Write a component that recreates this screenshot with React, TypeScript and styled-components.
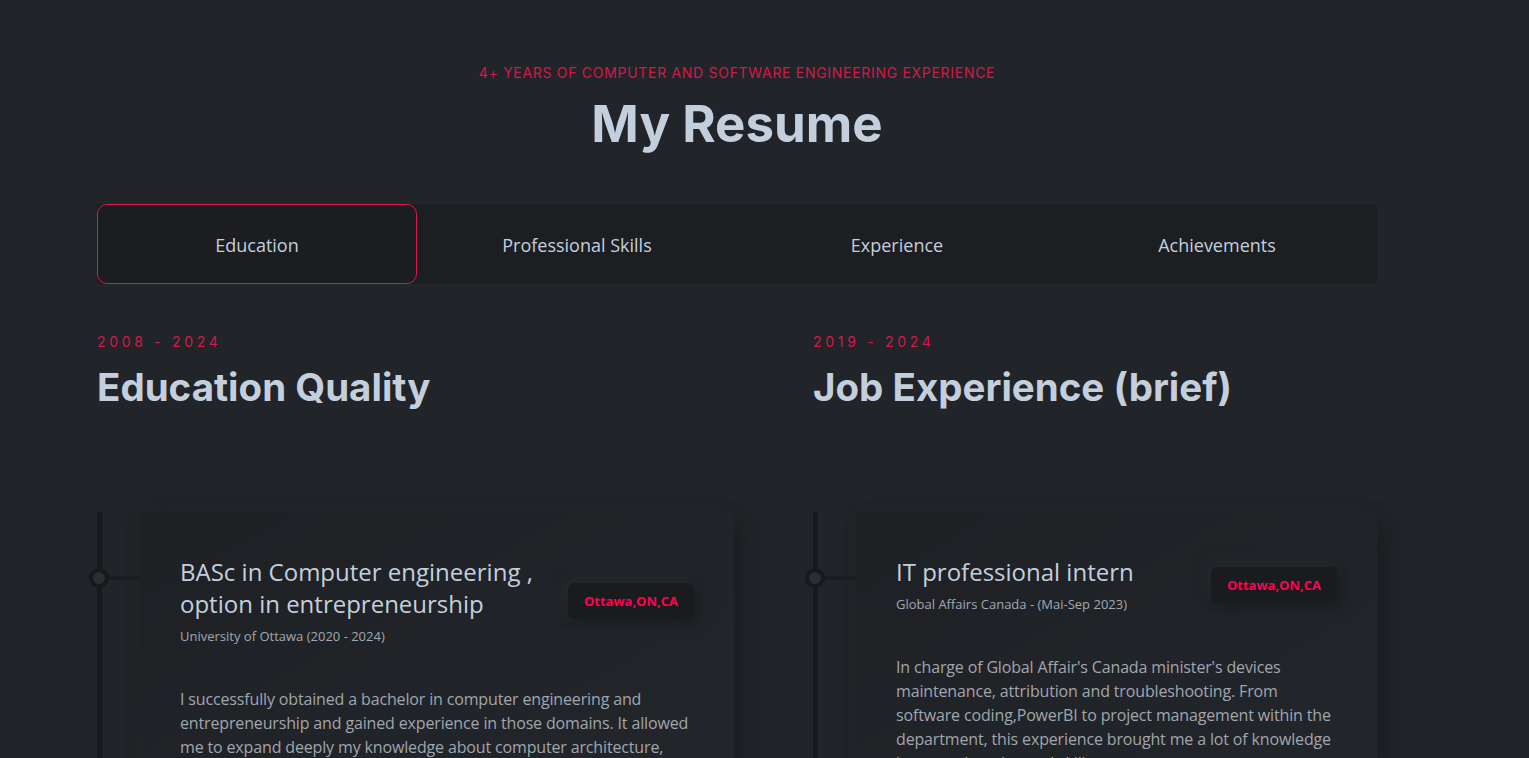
import React from 'react';
import styled, { createGlobalStyle } from 'styled-components';

const GlobalStyle = createGlobalStyle`
  html, body {
    margin: 0;
    padding: 0;
    background: #212428;
  }
  body {
    font-family: 'Open Sans', 'Noto Sans', sans-serif;
    color: #878e99;
    overflow: hidden;
  }
  * { box-sizing: border-box; }
`;

const tabs = ['Education', 'Professional Skills', 'Experience', 'Achievements'];

const columns = [
  {
    years: '2008 - 2024',
    heading: 'Education Quality',
    title: ['BASc in Computer engineering ,', 'option in entrepreneurship'],
    sub: 'University of Ottawa (2020 - 2024)',
    place: 'Ottawa,ON,CA',
    text:
      'I successfully obtained a bachelor in computer engineering and entrepreneurship and gained experience in those domains. It allowed me to expand deeply my knowledge about computer architecture, software design and project management.',
  },
  {
    years: '2019 - 2024',
    heading: 'Job Experience (brief)',
    title: ['IT professional intern'],
    sub: 'Global Affairs Canada - (Mai-Sep 2023)',
    place: 'Ottawa,ON,CA',
    text:
      "In charge of Global Affair's Canada minister's devices maintenance, attribution and troubleshooting. From software coding,PowerBI to project management within the department, this experience brought me a lot of knowledge in many domains and skills.",
  },
];

const App: React.FC = () => {
  return (
    <Page>
      <GlobalStyle />
      <Container>
        <Header>
          <Kicker>4+ years of computer and software engineering experience</Kicker>
          <PageTitle>My Resume</PageTitle>
        </Header>

        <TabList>
          {tabs.map((t, i) => (
            <Tab key={t} $active={i === 0}>
              {t}
            </Tab>
          ))}
        </TabList>

        <Columns>
          {columns.map((col, index) => (
            <Column key={index} $right={index === 1}>
              <Years>{col.years}</Years>
              <Heading>{col.heading}</Heading>
              <Timeline>
                <Item>
                  <CardTop>
                    <div>
                      <CardTitle>
                        {col.title.map((line) => (
                          <span key={line}>{line}</span>
                        ))}
                      </CardTitle>
                      <CardSub>{col.sub}</CardSub>
                    </div>
                    <Badge>{col.place}</Badge>
                  </CardTop>
                  <CardText>{col.text}</CardText>
                </Item>
              </Timeline>
            </Column>
          ))}
        </Columns>
      </Container>
    </Page>
  );
};

export default App;

const Page = styled.div`
  width: 100%;
  min-height: 758px;
  background: #212428;
`;

const Container = styled.div`
  width: 1280px;
  margin-left: 97px;
  padding-top: 62px;
`;

const Header = styled.div`
  text-align: center;
`;

const Kicker = styled.p`
  margin: 0;
  font-family: 'Inter', sans-serif;
  font-size: 14px;
  line-height: 22px;
  text-transform: uppercase;
  color: #d3194a;
  letter-spacing: 0.7px;
`;

const PageTitle = styled.h1`
  margin: 7px 0 0;
  font-family: 'Inter', sans-serif;
  font-weight: 700;
  font-size: 51px;
  line-height: 66px;
  color: #c4cfde;
`;

const TabList = styled.ul`
  list-style: none;
  margin: 47px 0 0;
  padding: 0;
  display: grid;
  grid-template-columns: repeat(4, 1fr);
  height: 80px;
  background: #1c1e22;
`;

const Tab = styled.li<{ $active?: boolean }>`
  display: flex;
  align-items: center;
  justify-content: center;
  padding-top: 2px;
  font-size: 18px;
  color: #c4cfde;
  border-radius: 10px;
  border: 1px solid ${(p) => (p.$active ? '#d81b4b' : 'transparent')};
  background: ${(p) => (p.$active ? '#1b1d21' : 'transparent')};
`;

const Columns = styled.div`
  display: grid;
  grid-template-columns: 640px 640px;
  margin-top: 48px;
`;

const Column = styled.div<{ $right?: boolean }>`
  padding-left: ${(p) => (p.$right ? '76px' : '0')};
  padding-right: ${(p) => (p.$right ? '0' : '3px')};
`;

const Years = styled.span`
  display: block;
  font-family: 'Inter', sans-serif;
  font-size: 14px;
  line-height: 20px;
  letter-spacing: 3.7px;
  color: #d3194a;
`;

const Heading = styled.h2`
  margin: 11px 0 0;
  font-family: 'Inter', sans-serif;
  font-weight: 700;
  font-size: 38.5px;
  line-height: 48px;
  color: #c4cfde;
`;

const Timeline = styled.div`
  margin-top: 101px;
  border-left: 5px solid #17191c;
  padding-left: 38px;
`;

const Item = styled.div`
  position: relative;
  padding: 44px 40px 60px;
  border-radius: 6px;
  background: linear-gradient(to right bottom, #1e2024, #23272b);
  box-shadow: 10px 10px 19px #1c1e22, -4px -4px 10px #23262a;

  &:before {
    content: '';
    position: absolute;
    left: -51px;
    top: 56px;
    width: 20px;
    height: 20px;
    border-radius: 50%;
    border: 4px solid #17191c;
    background: #2a2d31;
    box-sizing: border-box;
    z-index: 2;
  }
  &:after {
    content: '';
    position: absolute;
    left: -38px;
    top: 64px;
    width: 38px;
    height: 4px;
    background: #1a1d21;
  }
`;

const CardTop = styled.div`
  display: flex;
  align-items: center;
  justify-content: space-between;
  gap: 24px;
`;

const CardTitle = styled.h4`
  margin: 0;
  font-size: 24px;
  font-weight: 500;
  line-height: 32px;
  color: #c4cfde;

  span {
    display: block;
  }
`;

const CardSub = styled.span`
  display: block;
  margin-top: 7px;
  font-size: 13px;
  line-height: 18px;
  color: #a0a8b3;
`;

const Badge = styled.div`
  flex-shrink: 0;
  padding: 9px 16px;
  border-radius: 6px;
  background: #191b1e;
  box-shadow: 5px 5px 12px #1c1e22, -5px -5px 12px #262a2e;
  font-size: 13px;
  font-weight: 700;
  line-height: 18px;
  color: #ff014f;
`;

const CardText = styled.p`
  margin: 42px 0 0;
  font-size: 16px;
  font-weight: 500;
  letter-spacing: -0.15px;
  line-height: 24px;
  color: #a0a6ae;
`;
